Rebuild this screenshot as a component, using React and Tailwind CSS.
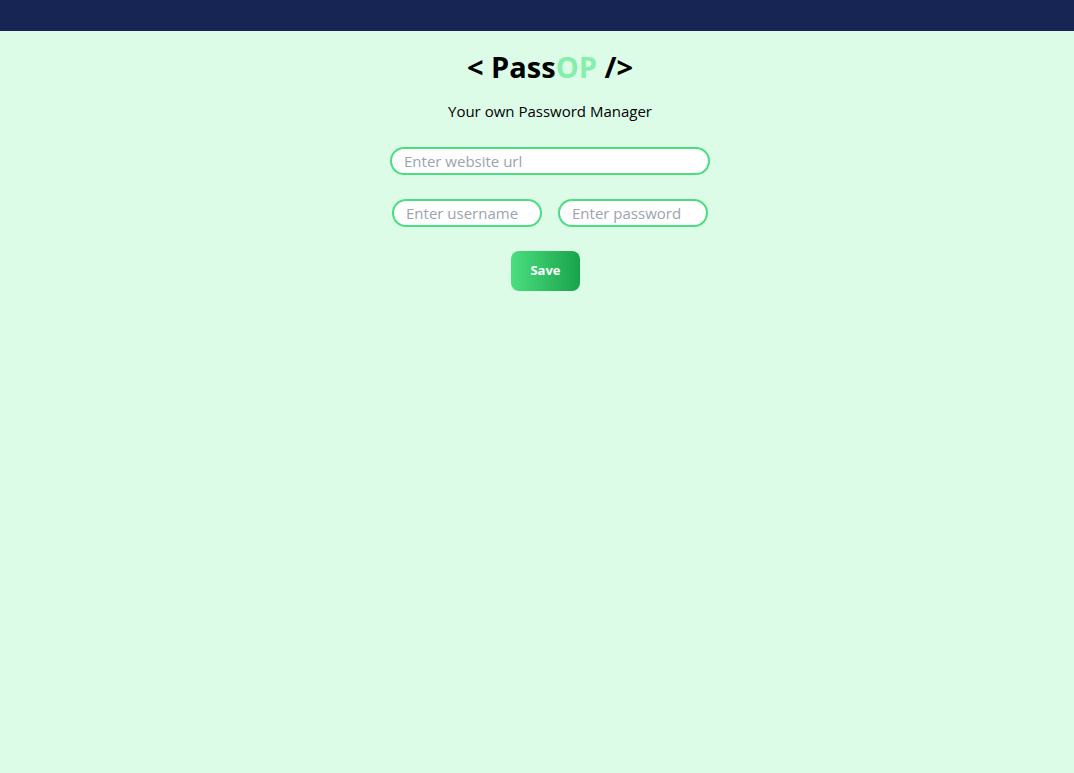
export default function App() {
  return (
    <div className="min-h-[773px] bg-[#dcfce7] font-['Open_Sans',sans-serif]">
      <nav className="h-[31px] bg-[#172554]"></nav>
      <div className="flex flex-col items-center pl-[26px]">
        <h1 className="mt-[16px] text-[29px] leading-[40px] font-bold text-black">
          &lt; Pass<span className="text-[#86efac]">OP</span> /&gt;
        </h1>
        <p className="mt-[12px] text-[15px] leading-[24px] text-black">Your own Password Manager</p>
        <input
          className="mt-[24px] w-[320px] h-[28px] rounded-full border-2 border-[#4ade80] bg-white px-3 text-[15px] outline-none placeholder:text-[#9ca3af]"
          placeholder="Enter website url"
          type="text"
        />
        <div className="mt-[24px] flex gap-4">
          <input
            className="w-[150px] h-[28px] rounded-full border-2 border-[#4ade80] bg-white px-3 text-[15px] outline-none placeholder:text-[#9ca3af]"
            placeholder="Enter username"
            type="text"
          />
          <input
            className="w-[150px] h-[28px] rounded-full border-2 border-[#4ade80] bg-white px-3 text-[15px] outline-none placeholder:text-[#9ca3af]"
            placeholder="Enter password"
            type="password"
          />
        </div>
        <button className="mt-[24px] ml-[-9px] w-[69px] h-[40px] rounded-lg bg-gradient-to-r from-[#4ade80] to-[#16a34a] text-white text-[13px] font-bold">
          Save
        </button>
      </div>
    </div>
  );
}
